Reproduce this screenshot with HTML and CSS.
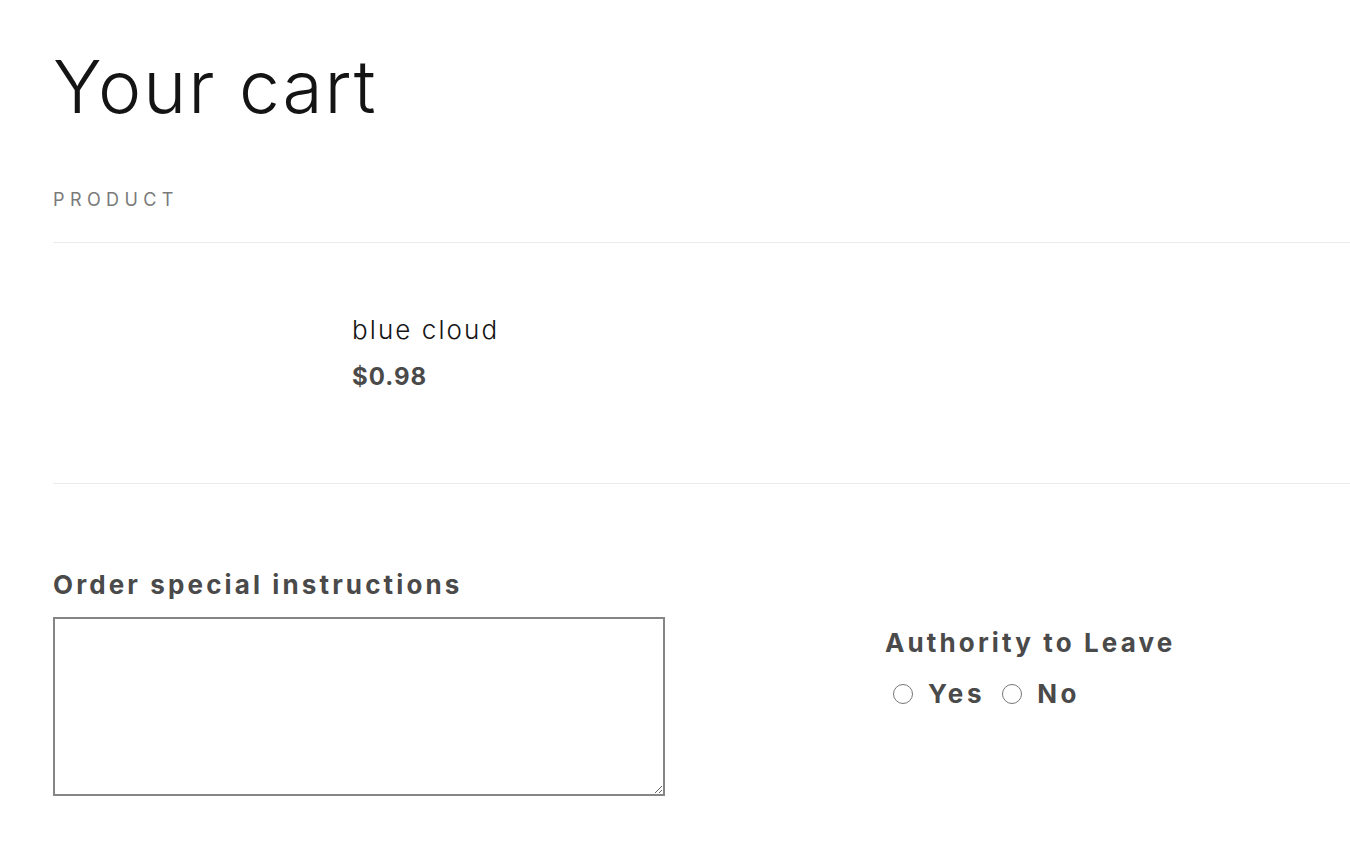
FILE: index.html
```html
<!DOCTYPE html>
<html lang="en">
<head>
  <meta charset="UTF-8" />
  <meta name="viewport" content="width=device-width, initial-scale=1.0" />
  <title>Your cart</title>
  <link rel="stylesheet" href="styles.css">
</head>
<body>

  <main class="cart">
    <h1 class="cart-title">Your cart</h1>

    <div class="cart-head">
      <span class="cart-head-label">Product</span>
    </div>

    <div class="cart-item">
      <div class="cart-item-media"></div>
      <div class="cart-item-info">
        <a href="#" class="cart-item-name">blue cloud</a>
        <div class="cart-item-price">$0.98</div>
      </div>
    </div>

    <div class="cart-footer">
      <div class="cart-note">
        <label for="note" class="cart-note-label">Order special instructions</label>
        <textarea id="note" class="cart-note-field"></textarea>
      </div>

      <div class="cart-atl">
        <p class="cart-atl-title">Authority to Leave</p>
        <div class="cart-atl-options">
          <label class="cart-atl-option"><input type="radio" name="atl" value="yes"> Yes</label>
          <label class="cart-atl-option"><input type="radio" name="atl" value="no"> No</label>
        </div>
      </div>
    </div>
  </main>

</body>
</html>
```

FILE: styles.css
```css
body {
  margin: 0;
  padding: 0;
  background-color: #ffffff;
  font-family: 'Inter', 'DejaVu Sans', sans-serif;
  color: #4a4a4a;
  overflow: hidden;
}

.cart {
  padding: 0 0 0 53px;
}

.cart-title {
  margin: 0;
  padding-top: 47px;
  font-size: 73px;
  font-weight: 300;
  line-height: 80px;
  color: #141414;
  letter-spacing: 0.027em;
}

.cart-head {
  margin-top: 61px;
  padding-bottom: 31px;
  border-bottom: 1px solid #ebebeb;
}

.cart-head-label {
  display: block;
  font-size: 18px;
  line-height: 23px;
  font-weight: 400;
  color: #7a7a7a;
  text-transform: uppercase;
  letter-spacing: 0.3em;
}

.cart-item {
  display: flex;
  gap: 29px;
  padding: 71px 0 92px;
  border-bottom: 1px solid #ebebeb;
}

.cart-item-media {
  width: 270px;
  flex-shrink: 0;
}

.cart-item-name {
  display: block;
  font-size: 26px;
  font-weight: 300;
  color: #141414;
  text-decoration: none;
  letter-spacing: 0.08em;
}

.cart-item-price {
  margin-top: 17px;
  font-size: 24px;
  font-weight: 700;
  color: #4a4a4a;
  letter-spacing: 1px;
}

.cart-footer {
  display: flex;
  padding-top: 85px;
}

.cart-note {
  display: flex;
  flex-direction: column;
  width: 612px;
}

.cart-note-label {
  font-size: 26px;
  font-weight: 700;
  letter-spacing: 0.12em;
  color: #4a4a4a;
  margin-bottom: 17px;
}

.cart-note-field {
  box-sizing: border-box;
  width: 612px;
  height: 179px;
  border: 2px solid #858585;
  margin: 0;
}

.cart-atl {
  margin-left: 220px;
  margin-top: 58px;
}

.cart-atl-title {
  margin: 0;
  font-size: 26px;
  font-weight: 700;
  letter-spacing: 0.12em;
  color: #4a4a4a;
}

.cart-atl-options {
  display: flex;
  gap: 17px;
  margin-top: 20px;
  padding-left: 8px;
}

.cart-atl-option {
  display: flex;
  align-items: center;
  gap: 15px;
  font-size: 26px;
  font-weight: 700;
  letter-spacing: 0.14em;
  color: #4a4a4a;
}

.cart-atl-option input {
  margin: 0;
  width: 20px;
  height: 20px;
  accent-color: #767676;
}
```
